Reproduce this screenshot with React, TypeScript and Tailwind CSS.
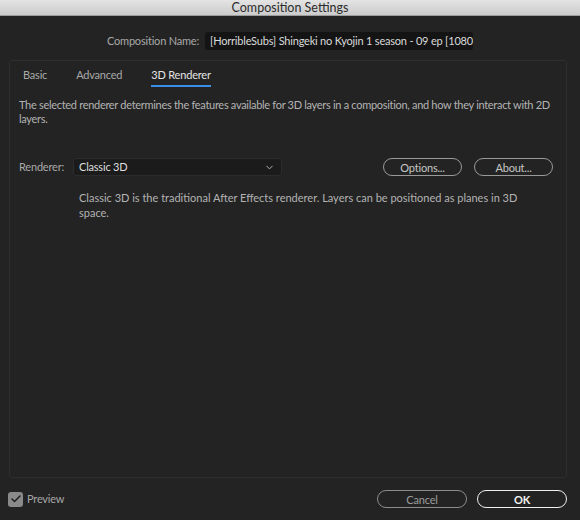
import { Check, ChevronDown } from "lucide-react";

const FONT = "font-['Lato','Liberation_Sans',sans-serif] tracking-[-0.2px]";

function PillButton({ label, className }: { label: string; className: string }) {
  return (
    <button
      className={`flex h-[18px] items-center justify-center rounded-full border-[1.5px] text-[11px] leading-none ${className}`}
    >
      {label}
    </button>
  );
}

function Tabs() {
  const tabs = ["Basic", "Advanced", "3D Renderer"];
  return (
    <div className="flex gap-[29px] pl-[13px] pt-[7px]">
      {tabs.map((t) => {
        const active = t === "3D Renderer";
        return (
          <div key={t} className="flex flex-col">
            <span className={`text-[11px] leading-[14px] ${active ? "text-[#e4e4e4]" : "text-[#a9a9a9]"}`}>{t}</span>
            <div className={`mt-[3px] h-[2px] ${active ? "bg-[#3a8fe8]" : "bg-transparent"}`} />
          </div>
        );
      })}
    </div>
  );
}

export default function App() {
  return (
    <div className={`flex h-[520px] w-[580px] flex-col bg-[#232323] ${FONT}`}>
      {/* window title */}
      <div className="flex h-[16px] items-center justify-center border-b border-[#9c9c9c] bg-gradient-to-b from-[#e4e4e4] to-[#cbcbcb]">
        <span className="text-[12.5px] leading-[14px] tracking-normal text-[#2b2b2b]">Composition Settings</span>
      </div>

      {/* name row */}
      <div className="mt-[16px] flex items-center">
        <span className="w-[199px] text-right text-[11px] text-[#a9a9a9]">Composition Name:</span>
        <div className="ml-[6px] h-[18px] w-[268px] overflow-hidden whitespace-nowrap rounded-[3px] bg-[#141414] px-[5px] text-[11px] leading-[18px] text-[#dadada]">
          [HorribleSubs] Shingeki no Kyojin 1 season - 09 ep [1080p].mkv
        </div>
      </div>

      {/* panel */}
      <div className="ml-[9px] mt-[10px] flex h-[418px] w-[558px] flex-col rounded-[3px] border border-[#2e2e2e]">
        <Tabs />
        <p className="mt-[11px] pl-[9px] pr-[4px] text-[11px] leading-[14px] tracking-[-0.3px] text-[#b3b3b3]">
          The selected renderer determines the features available for 3D layers in a composition, and how they interact with 2D
          layers.
        </p>

        <div className="mt-[32px] flex items-center pl-[9px] pr-[13px]">
          <span className="w-[54px] text-[11px] text-[#a9a9a9]">Renderer:</span>
          <div className="flex h-[18px] w-[209px] items-center justify-between rounded-[3px] border border-[#2c2c2c] bg-[#1b1b1b] pl-[5px] pr-[6px]">
            <span className="text-[11px] text-[#dedede]">Classic 3D</span>
            <ChevronDown size={11} strokeWidth={2} className="text-[#bdbdbd]" />
          </div>
          <div className="ml-auto flex gap-[12px]">
            <PillButton label="Options..." className="w-[79px] border-[#9a9a9a] text-[#c6c6c6]" />
            <PillButton label="About..." className="w-[79px] border-[#9a9a9a] text-[#c6c6c6]" />
          </div>
        </div>

        <p className="ml-[69px] mt-[14px] pr-[40px] text-[11px] leading-[15px] tracking-normal text-[#b3b3b3]">
          Classic 3D is the traditional After Effects renderer. Layers can be positioned as planes in 3D space.
        </p>
      </div>

      {/* footer */}
      <div className="mt-[12px] flex items-center pl-[8px] pr-[13px]">
        <div className="flex h-[15px] w-[15px] items-center justify-center rounded-[3px] bg-[#8a8a8a]">
          <Check size={12} strokeWidth={3} className="text-[#1e1e1e]" />
        </div>
        <span className="ml-[4px] text-[11px] text-[#a6a6a6]">Preview</span>
        <div className="ml-auto flex gap-[10px]">
          <PillButton label="Cancel" className="w-[90px] border-[#8c8c8c] text-[#9c9c9c]" />
          <PillButton label="OK" className="w-[90px] border-[#f0f0f0] font-bold text-[#f2f2f2]" />
        </div>
      </div>
    </div>
  );
}
